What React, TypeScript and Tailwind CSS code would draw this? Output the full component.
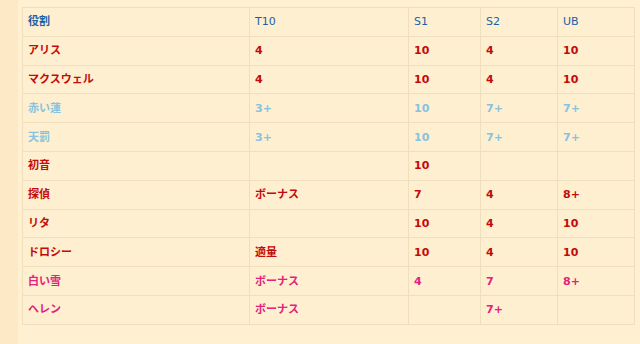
import React from "react";

type Tone = "red" | "sky" | "pink";

interface Row {
  name: string;
  tone: Tone;
  cells: string[];
}

const rows: Row[] = [
  { name: "アリス", tone: "red", cells: ["4", "10", "4", "10"] },
  { name: "マクスウェル", tone: "red", cells: ["4", "10", "4", "10"] },
  { name: "赤い蓮", tone: "sky", cells: ["3+", "10", "7+", "7+"] },
  { name: "天罰", tone: "sky", cells: ["3+", "10", "7+", "7+"] },
  { name: "初音", tone: "red", cells: ["", "10", "", ""] },
  { name: "探偵", tone: "red", cells: ["ボーナス", "7", "4", "8+"] },
  { name: "リタ", tone: "red", cells: ["", "10", "4", "10"] },
  { name: "ドロシー", tone: "red", cells: ["適量", "10", "4", "10"] },
  { name: "白い雪", tone: "pink", cells: ["ボーナス", "4", "7", "8+"] },
  { name: "ヘレン", tone: "pink", cells: ["ボーナス", "", "7+", ""] },
];

const toneClass: Record<Tone, string> = {
  red: "text-[#c40a0a]",
  sky: "text-[#86c3e0]",
  pink: "text-[#e5207e]",
};

const cell = "h-[28.8px] border border-[#efdfbd] px-[5px] py-0 text-left align-middle";

const App: React.FC = () => {
  return (
    <div
      className="flex h-[344px] w-[640px] overflow-hidden bg-[#fde9c6] text-[11px] leading-none"
      style={{ fontFamily: '"DejaVu Sans", "Noto Sans CJK JP", sans-serif' }}
    >
      <div className="w-[18px] shrink-0" />
      <div className="flex-1 bg-[#fff0d1] pl-[4px] pt-[7px]">
        <table className="w-[612px] table-fixed border-collapse bg-[#fdefcf]">
          <colgroup>
            <col className="w-[227px]" />
            <col className="w-[159px]" />
            <col className="w-[72px]" />
            <col className="w-[77px]" />
            <col className="w-[77px]" />
          </colgroup>
          <thead>
            <tr className="text-[#1d5fa6]">
              <th className={`${cell} font-bold`}>役割</th>
              <th className={`${cell} font-normal`}>T10</th>
              <th className={`${cell} font-normal`}>S1</th>
              <th className={`${cell} font-normal`}>S2</th>
              <th className={`${cell} font-normal`}>UB</th>
            </tr>
          </thead>
          <tbody>
            {rows.map((r) => (
              <tr key={r.name} className={`${toneClass[r.tone]} font-bold`}>
                <td className={cell}>{r.name}</td>
                {r.cells.map((c, i) => (
                  <td key={i} className={cell}>
                    {c}
                  </td>
                ))}
              </tr>
            ))}
          </tbody>
        </table>
      </div>
    </div>
  );
};

export default App;
